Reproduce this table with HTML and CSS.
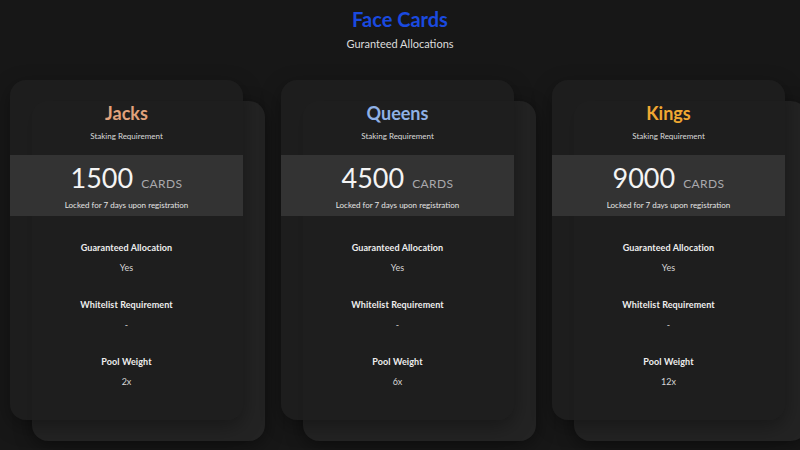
FILE: index.html
```html
<!DOCTYPE html>
<html lang="en">
<head>
<meta charset="utf-8">
<title>Face Cards</title>
<link rel="stylesheet" href="styles.css">
</head>
<body>
<header class="head">
  <h1 class="title">Face Cards</h1>
  <p class="subtitle">Guranteed Allocations</p>
</header>
<main class="cards">
  <div class="slot">
    <section class="card">
      <h2 class="name name-jacks">Jacks</h2>
      <p class="req">Staking Requirement</p>
      <div class="band">
        <div class="amount"><span class="num">1500</span><span class="unit">CARDS</span></div>
        <p class="lock">Locked for 7 days upon registration</p>
      </div>
      <dl class="specs">
        <dt>Guaranteed Allocation</dt><dd>Yes</dd>
        <dt>Whitelist Requirement</dt><dd>-</dd>
        <dt>Pool Weight</dt><dd>2x</dd>
      </dl>
    </section>
  </div>
  <div class="slot">
    <section class="card">
      <h2 class="name name-queens">Queens</h2>
      <p class="req">Staking Requirement</p>
      <div class="band">
        <div class="amount"><span class="num">4500</span><span class="unit">CARDS</span></div>
        <p class="lock">Locked for 7 days upon registration</p>
      </div>
      <dl class="specs">
        <dt>Guaranteed Allocation</dt><dd>Yes</dd>
        <dt>Whitelist Requirement</dt><dd>-</dd>
        <dt>Pool Weight</dt><dd>6x</dd>
      </dl>
    </section>
  </div>
  <div class="slot">
    <section class="card">
      <h2 class="name name-kings">Kings</h2>
      <p class="req">Staking Requirement</p>
      <div class="band">
        <div class="amount"><span class="num">9000</span><span class="unit">CARDS</span></div>
        <p class="lock">Locked for 7 days upon registration</p>
      </div>
      <dl class="specs">
        <dt>Guaranteed Allocation</dt><dd>Yes</dd>
        <dt>Whitelist Requirement</dt><dd>-</dd>
        <dt>Pool Weight</dt><dd>12x</dd>
      </dl>
    </section>
  </div>
</main>
</body>
</html>
```
FILE: styles.css
```css
* { box-sizing: border-box; }
html, body { height: 100%; }
body {
  margin: 0;
  background: #171717;
  font-family: Lato, "Open Sans", sans-serif;
  color: #e6e6e6;
  overflow: hidden;
}
.head {
  text-align: center;
  padding-top: 7px;
}
.title {
  margin: 0;
  font-size: 20px;
  line-height: 24px;
  font-weight: 700;
  color: #1a4ae0;
}
.subtitle {
  margin: 6px 0 0;
  font-size: 11px;
  line-height: 14px;
  color: #dcdcdc;
}
.cards {
  display: flex;
  gap: 38px;
  padding-left: 10px;
  margin-top: 29px;
}
.slot {
  position: relative;
  width: 233px;
  flex: none;
}
.slot::before {
  content: "";
  position: absolute;
  left: 22px;
  top: 21px;
  width: 100%;
  height: 100%;
  background: #232323;
  border-radius: 16px;
  box-shadow: 0 4px 18px rgba(0, 0, 0, 0.45);
}
.card {
  position: relative;
  height: 340px;
  background: rgba(30, 30, 30, 0.9);
  border-radius: 16px;
  box-shadow: 0 6px 20px rgba(0, 0, 0, 0.35);
  text-align: center;
  padding-top: 22px;
}
.name {
  margin: 0;
  font-size: 18px;
  line-height: 22px;
  font-weight: 700;
}
.name-jacks { color: #e2a27c; }
.name-queens { color: #8fb1e6; }
.name-kings { color: #f0a832; }
.req {
  margin: 6px 0 0;
  font-size: 8px;
  line-height: 12px;
  color: #dadada;
}
.band {
  margin-top: 13px;
  height: 61px;
  background: #333333;
  padding-top: 8px;
}
.amount {
  display: flex;
  justify-content: center;
  align-items: baseline;
  gap: 8px;
  height: 30px;
  line-height: 30px;
}
.num {
  font-size: 27px;
  line-height: 30px;
  font-weight: 400;
  color: #f4f4f4;
}
.unit {
  font-size: 12px;
  line-height: 30px;
  color: #a9a9ad;
  letter-spacing: 0.4px;
}
.lock {
  margin: 6px 0 0;
  font-size: 8px;
  line-height: 12px;
  color: #e4e4e4;
}
.specs {
  margin: 25px 0 0;
}
.specs dt {
  font-size: 9px;
  line-height: 14px;
  font-weight: 700;
  color: #eeeeee;
  letter-spacing: 0.1px;
}
.specs dd {
  margin: 7px 0 24px;
  font-size: 9px;
  line-height: 12px;
  color: #d6d6d6;
}
```
